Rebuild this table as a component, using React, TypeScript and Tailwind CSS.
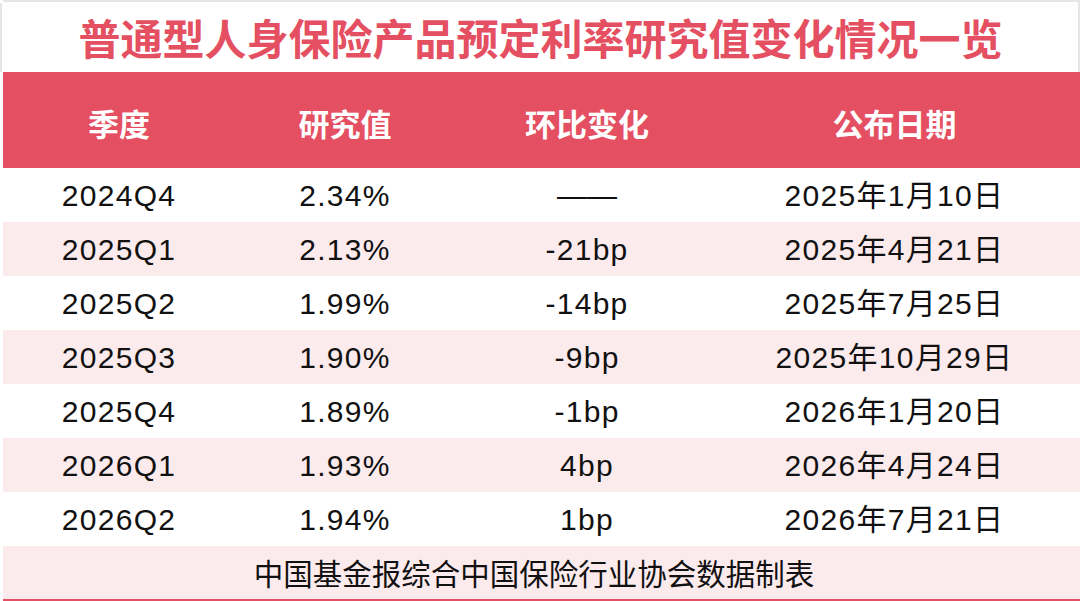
const rows = [
  ["2024Q4", "2.34%", "——", "2025年1月10日"],
  ["2025Q1", "2.13%", "-21bp", "2025年4月21日"],
  ["2025Q2", "1.99%", "-14bp", "2025年7月25日"],
  ["2025Q3", "1.90%", "-9bp", "2025年10月29日"],
  ["2025Q4", "1.89%", "-1bp", "2026年1月20日"],
  ["2026Q1", "1.93%", "4bp", "2026年4月24日"],
  ["2026Q2", "1.94%", "1bp", "2026年7月21日"],
];

const cjk = "font-['Noto_Sans_CJK_SC',sans-serif]";
const num = "font-['Liberation_Sans','Noto_Sans_CJK_SC',sans-serif]";

export default function App() {
  return (
    <div className="w-[1080px] h-[601px] bg-white overflow-hidden flex flex-col">
      {/* 标题 */}
      <div className="flex h-[72px]">
        <div className="w-[2px] mt-[3px] bg-[#e6e6e6]" />
        <div className="w-px" />
        <div
          className={`flex-1 flex items-center justify-center border-t-2 border-r-2 border-[#e6e6e6] text-[42px] font-bold leading-none text-[#e44f61] ${cjk}`}
        >
          普通型人身保险产品预定利率研究值变化情况一览
        </div>
      </div>

      <div className="ml-[3px] flex-1 flex flex-col">
        {/* 表头 */}
        <div
          className={`flex h-[96px] items-center bg-[#e44f61] pt-[6px] text-[31px] font-bold text-white ${cjk}`}
        >
          <div className="w-[232px] text-center">季度</div>
          <div className="w-[220px] text-center">研究值</div>
          <div className="w-[264px] text-center">环比变化</div>
          <div className="flex-1 text-center pr-[10px]">公布日期</div>
        </div>

        {rows.map((r, i) => (
          <div
            key={r[0]}
            className={`flex h-[54px] items-center text-[30px] tracking-[1.3px] text-[#111] ${num} ${
              i % 2 === 1 ? "bg-[#fcebed]" : "bg-white"
            }`}
          >
            <div className="w-[232px] text-center">{r[0]}</div>
            <div className="w-[220px] text-center">{r[1]}</div>
            <div className="w-[264px] flex justify-center">
              {r[2] === "——" ? (
                <span className="tracking-normal">{r[2]}</span>
              ) : (
                r[2]
              )}
            </div>
            <div className="flex-1 text-center pr-[10px]">{r[3]}</div>
          </div>
        ))}

        {/* 来源 */}
        <div
          className={`flex flex-1 items-center justify-center bg-[#fcebed] pr-[15px] text-[29.5px] text-[#111] ${cjk}`}
        >
          中国基金报综合中国保险行业协会数据制表
        </div>
        <div className="h-[2px] bg-[#e44f61]" />
      </div>
    </div>
  );
}
